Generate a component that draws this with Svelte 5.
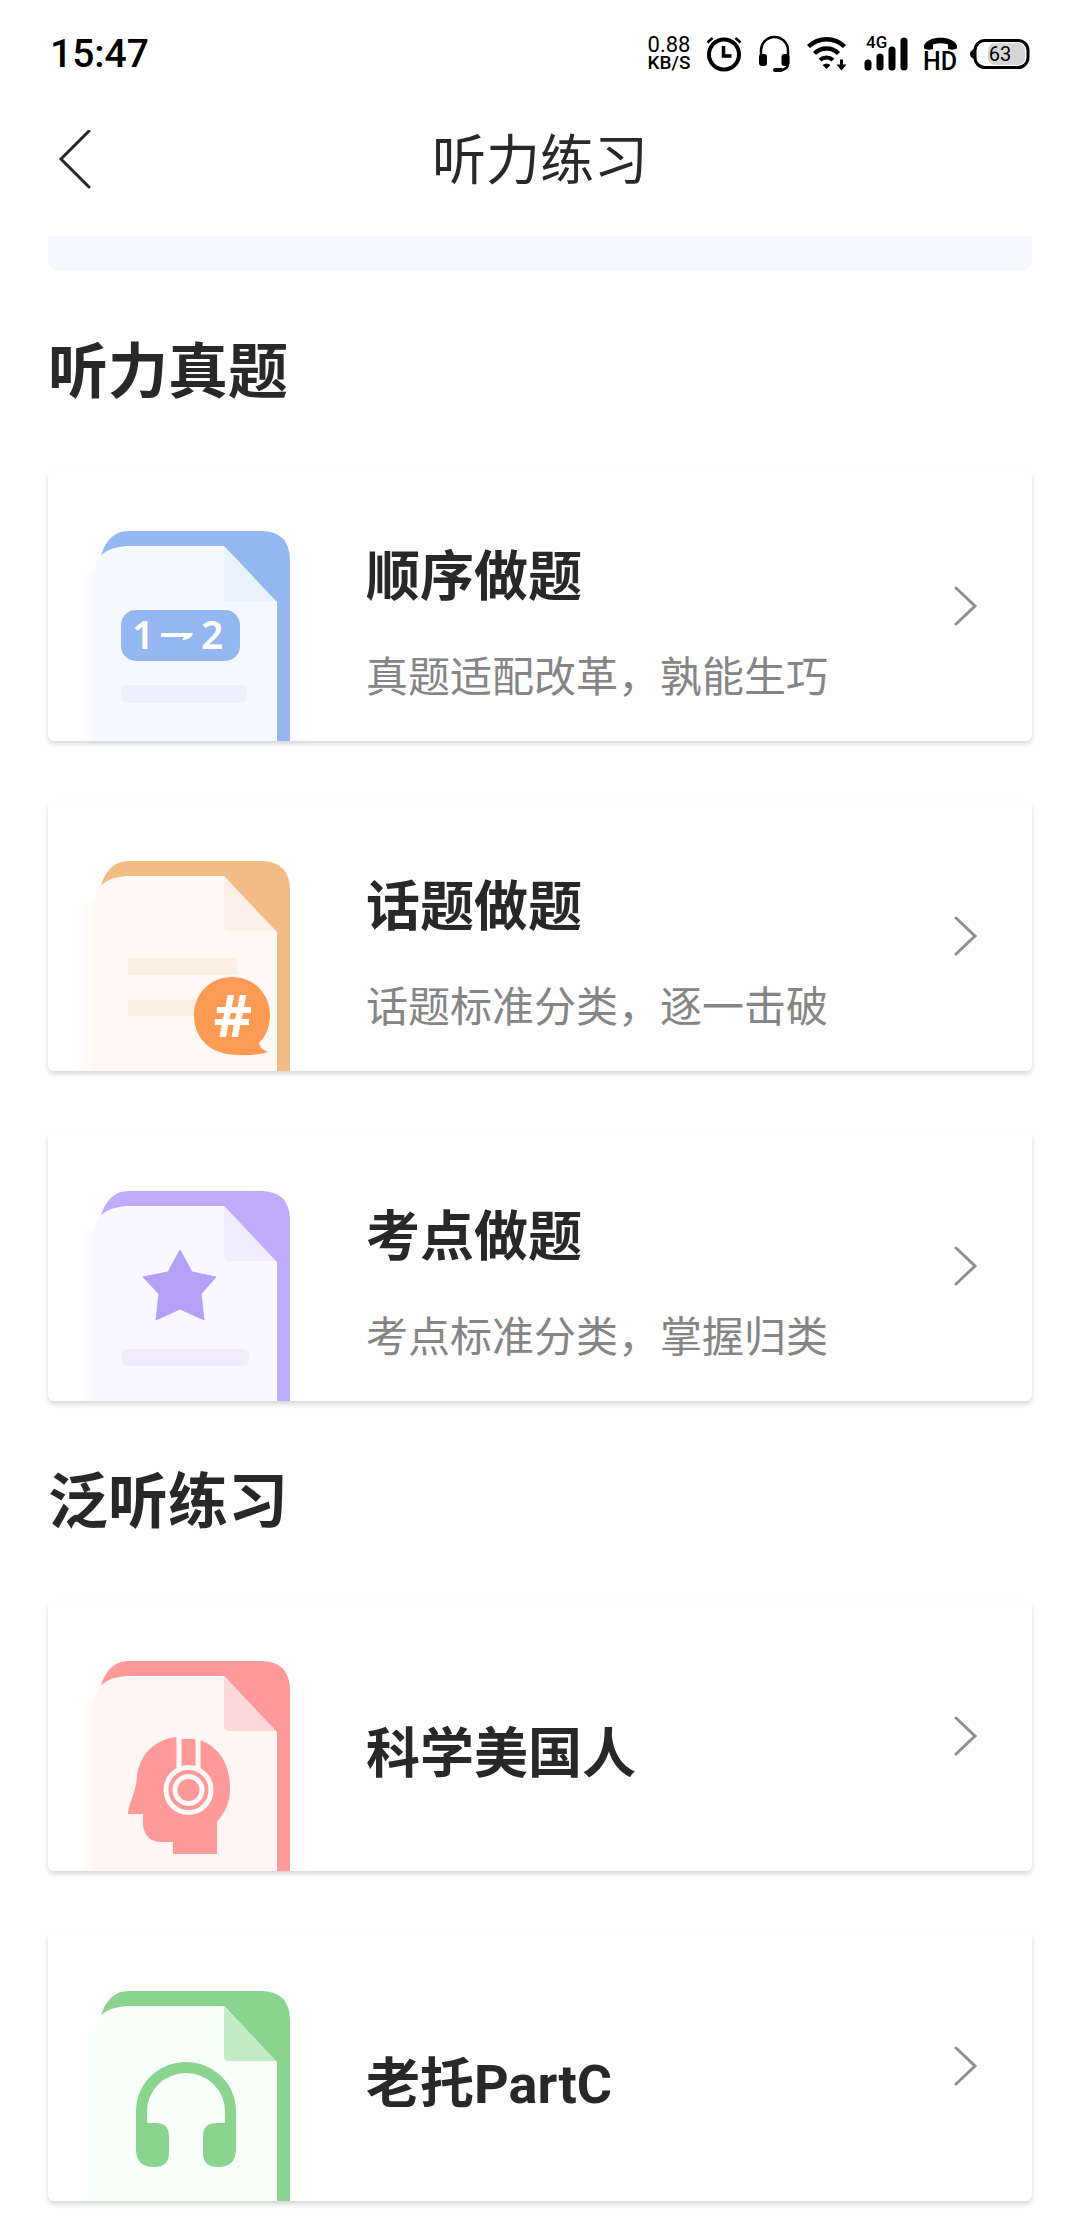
<script lang="ts">
	type Kind = 'order' | 'topic' | 'point' | 'science' | 'toefl';

	interface Item {
		kind: Kind;
		title: string;
		desc?: string;
	}

	interface Section {
		title: string;
		items: Item[];
	}

	const sections: Section[] = [
		{
			title: '听力真题',
			items: [
				{ kind: 'order', title: '顺序做题', desc: '真题适配改革，孰能生巧' },
				{ kind: 'topic', title: '话题做题', desc: '话题标准分类，逐一击破' },
				{ kind: 'point', title: '考点做题', desc: '考点标准分类，掌握归类' }
			]
		},
		{
			title: '泛听练习',
			items: [
				{ kind: 'science', title: '科学美国人' },
				{ kind: 'toefl', title: '老托PartC' }
			]
		}
	];
</script>

<div class="page">
	<div class="status">
		<span class="status__time">15:47</span>
		<div class="status__icons">
			<span class="speed">
				<span class="speed__value">0.88</span>
				<span class="speed__unit">KB/S</span>
			</span>
			<!-- alarm -->
			<svg width="40" height="36" viewBox="0 0 40 36" fill="none" stroke="#000">
				<circle cx="18" cy="18.500" r="15" stroke-width="4" />
				<path d="M17.500 10v10h8" stroke-width="3.500" />
				<path d="M1.500 6.500l5-4.500M34.500 6.500l-5-4.500" stroke-width="2.500" />
			</svg>
			<!-- headset -->
			<svg width="36" height="36" viewBox="0 0 36 36" fill="none" stroke="#000">
				<path d="M3 21V14.500a13.500 13.500 0 0 1 27 0V27q0 7-8 7" stroke-width="2.500" />
				<rect x="1" y="18" width="8" height="12" rx="3" fill="#000" stroke="none" />
				<rect x="23.500" y="18" width="8" height="12" rx="3" fill="#000" stroke="none" />
				<path d="M17 34h6" stroke-width="4" stroke-linecap="round" />
			</svg>
			<!-- wifi -->
			<svg width="44" height="36" viewBox="0 0 44 36" fill="none" stroke="#000">
				<path d="M2.500 10.500a26 26 0 0 1 36 0" stroke-width="4.500" />
				<path d="M8.500 17.500a17 17 0 0 1 24 0" stroke-width="4.500" />
				<path d="M14 24a9.500 9.500 0 0 1 13 0" stroke-width="4" />
				<path d="M16.500 29q4-3 8 0l-4 4z" fill="#000" stroke="none" />
				<path d="M35.500 23.500v8" stroke-width="3" />
				<path d="M30.500 28.500h10l-5 6z" fill="#000" stroke="none" />
			</svg>
			<!-- signal -->
			<svg width="48" height="36" viewBox="0 0 48 36" stroke="#000" stroke-width="7" stroke-linecap="round">
				<text class="signal__text" x="4" y="12">4G</text>
				<path d="M6 27v4M18 21v10M30 14v17M42 5v26" />
			</svg>
			<!-- HD call -->
			<svg width="36" height="36" viewBox="0 0 36 36">
				<path d="M2 9.500C6-1 31-1 35 9.500v3q-4 2-9 .5V8.500q-7.500-2.500-15 0V13q-5 1.500-9-.5z" />
				<text class="hd__text" x="1" y="34">HD</text>
			</svg>
			<!-- battery -->
			<svg width="60" height="36" viewBox="0 0 60 36">
				<rect x="18" y="7" width="37" height="22" rx="7" fill="#d6d6d6" />
				<rect x="5" y="4.500" width="53" height="27" rx="10" fill="none" stroke="#000" stroke-width="3" />
				<path d="M4 13v10Q0 21 0 18t4-5z" />
				<text class="battery__text" x="30" y="25" text-anchor="middle">63</text>
			</svg>
		</div>
	</div>

	<header class="header">
		<button class="header__back" type="button" aria-label="返回">
			<svg width="34" height="60" viewBox="0 0 34 60" fill="none">
				<path d="M31 1L3 29l28 28" stroke="#282828" stroke-width="3" stroke-linecap="round" />
			</svg>
		</button>
		<h1 class="header__title">听力练习</h1>
	</header>

	<main class="content">
		<div class="banner"></div>

		{#each sections as section (section.title)}
			<section class="section">
				<h2 class="section__title">{section.title}</h2>
				<div class="section__list">
					{#each section.items as item (item.kind)}
						<a class="card card--{item.kind}" href="#{item.kind}">
							<svg class="card__icon" width="210" height="210" viewBox="0 0 210 210">
								<defs>
									<linearGradient id="fade-{item.kind}">
										<stop offset="0" stop-color="var(--paper)" stop-opacity="0" />
										<stop offset="1" stop-color="var(--paper)" />
									</linearGradient>
								</defs>
								<rect x="-8" y="40" width="14" height="170" fill="url(#fade-{item.kind})" />
								<path
									fill="var(--paper)"
									d="M11 24Q20 16 37 16H134L186 69V210H5V40Q5 30 11 24z"
								/>
								<path fill="var(--fold)" d="M134 16L186 70H139Q134 70 134 65z" />
								<path
									fill="var(--main)"
									d="M11 24Q19 0 38 0H173Q199 1 200 28V210H187V71L134 15H37Q20 16 11 24z"
								/>
								{#if item.kind === 'order'}
									<rect x="31" y="79" width="119" height="51" rx="15" fill="var(--main)" />
									<g class="order__text">
										<text x="42" y="118">1</text>
										<text x="111" y="118">2</text>
									</g>
									<path d="M71 102H103Q101 109 92 109L94 106H71z" fill="#fff" />
									<rect x="31" y="154" width="126" height="18" rx="6" fill="var(--line)" />
								{:else if item.kind === 'topic'}
									<rect x="38" y="97" width="109" height="17" fill="var(--line)" />
									<rect x="38" y="139" width="80" height="16" fill="var(--line)" />
									<path
										d="M142 116c22 0 38 17 38 38 0 12-4 21-11 28q0 5 9 9-12 4-30 3c-28 0-44-17-44-40 0-21 16-38 38-38z"
										fill="#fd9a54"
									/>
									<text class="topic__text" x="143" y="176" text-anchor="middle">#</text>
								{:else if item.kind === 'point'}
									<path
										d="M90 59L102 81L126 86L111 103L114 129L90 118L66 129L69 103L53 86L78 81z"
										fill="#b4a0f6"
										stroke="#b4a0f6"
										stroke-width="1"
										stroke-linejoin="round"
									/>
									<rect x="32" y="158" width="127" height="17" rx="6" fill="var(--line)" />
								{:else if item.kind === 'science'}
									<path
										d="M87 76C66 78 50 92 47 115C46 133 38 143 38 153H53V164Q55 181 72 181H83V193H127V161C136 149 140 142 140 127C140 103 129 86 110 79L105 78H92z"
										fill="var(--main)"
									/>
									<g fill="none" stroke="#fff9f8" stroke-width="5">
										<path d="M89 73V108M108 73V108" />
										<circle cx="98.500" cy="129" r="22.500" />
										<circle cx="98.500" cy="129" r="13.500" />
									</g>
								{:else}
									<path
										d="M46 120a50 49 0 0 1 100 0V158q0 18-18 18-15 0-15-14V145q0-13 14-13h8V120a39 38 0 0 0-78 0v12h8q14 0 14 13v17q0 14-15 14-18 0-18-18z"
										fill="var(--main)"
									/>
								{/if}
							</svg>
							<div class="card__body">
								<h3 class="card__title">{item.title}</h3>
								{#if item.desc}
									<p class="card__desc">{item.desc}</p>
								{/if}
							</div>
							<svg class="card__arrow" width="24" height="40" viewBox="0 0 24 40" fill="none" aria-hidden="true">
								<path d="M2 2l19 18L2 38" stroke="#8f8f8f" stroke-width="3" stroke-linecap="round" />
							</svg>
						</a>
					{/each}
				</div>
			</section>
		{/each}
	</main>
</div>

<style>
	:global(body) {
		margin: 0;
		background: #fefefe;
	}

	.page {
		font-family: Roboto, 'Noto Sans CJK SC', sans-serif;
		color: #282828;
		padding-bottom: 30px;
	}

	.status {
		display: flex;
		align-items: center;
		justify-content: space-between;
		height: 108px;
		padding: 0 50px;
		color: #000;
	}

	.status__time {
		font-size: 39px;
		font-weight: 500;
		line-height: 48px;
	}

	.status__icons {
		display: flex;
		align-items: center;
		gap: 12px;
	}

	.status__icons svg {
		overflow: visible;
	}

	.speed {
		display: flex;
		flex-direction: column;
		align-items: center;
		width: 50px;
		font-weight: 500;
		line-height: 18px;
	}

	.speed__value {
		font-size: 22px;
		font-weight: 400;
	}

	.speed__unit {
		font-size: 19px;
	}

	.signal__text {
		font-size: 17px;
		font-weight: 500;
		stroke: none;
	}

	.hd__text {
		font-size: 25px;
		font-weight: 500;
	}

	.battery__text {
		font-size: 20px;
		font-weight: 400;
	}

	.header {
		display: grid;
		grid-template-columns: 1fr auto 1fr;
		align-items: center;
		height: 104px;
		padding: 0 48px;
	}

	.header__back {
		display: flex;
		justify-self: start;
		padding: 0 10px;
		border: 0;
		background: none;
		cursor: pointer;
	}

	.header__title {
		margin: 0;
		padding-top: 4px;
		font-size: 54px;
		font-weight: 400;
		line-height: 72px;
	}

	.content {
		padding: 24px 48px 0;
	}

	.banner {
		height: 35px;
		border-radius: 0 0 12px 12px;
		background: #f7f7fe;
	}

	.section {
		padding-top: 72px;
	}

	.section__title {
		margin: 0 0 68px;
		font-size: 60px;
		font-weight: 700;
		line-height: 60px;
	}

	.section__list {
		display: flex;
		flex-direction: column;
		gap: 60px;
	}

	.card {
		display: flex;
		align-items: center;
		height: 270px;
		padding: 0 54px 0 42px;
		box-sizing: border-box;
		border-radius: 6px;
		background: #fefefe;
		box-shadow: 0 3px 5px rgba(0, 0, 0, 0.16);
		color: inherit;
		text-decoration: none;
	}

	.card__icon {
		flex: none;
		align-self: flex-end;
		overflow: visible;
	}

	.card__body {
		flex: 1;
		padding: 38px 0 0 66px;
	}

	.card__title {
		margin: 0;
		font-size: 54px;
		font-weight: 700;
		line-height: 72px;
	}

	.card__desc {
		margin: 34px 0 0;
		font-size: 42px;
		font-weight: 400;
		line-height: 60px;
		color: #858585;
	}

	.card__arrow {
		flex: none;
	}

	.card--order {
		--main: #94b7f1;
		--paper: #f5f8fe;
		--fold: #e9f3fe;
		--line: #eaf0fd;
	}

	.card--topic {
		--main: #f2bc84;
		--paper: #fef9f4;
		--fold: #fcf0e8;
		--line: #fbefe3;
	}

	.card--point {
		--main: #c0acfc;
		--paper: #f8f8fe;
		--fold: #efecfd;
		--line: #efebfd;
	}

	.card--science {
		--main: #fe9999;
		--paper: #fff5f4;
		--fold: #fdd8d8;
	}

	.card--toefl {
		--main: #8bd490;
		--paper: #f8fffa;
		--fold: #c1ebc4;
	}

	.order__text {
		font-family: 'Noto Sans', sans-serif;
		font-size: 39px;
		font-weight: 600;
		fill: #fff;
	}

	.topic__text {
		font-family: 'Noto Sans', sans-serif;
		font-size: 60px;
		font-weight: 700;
		fill: #fff;
	}
</style>
